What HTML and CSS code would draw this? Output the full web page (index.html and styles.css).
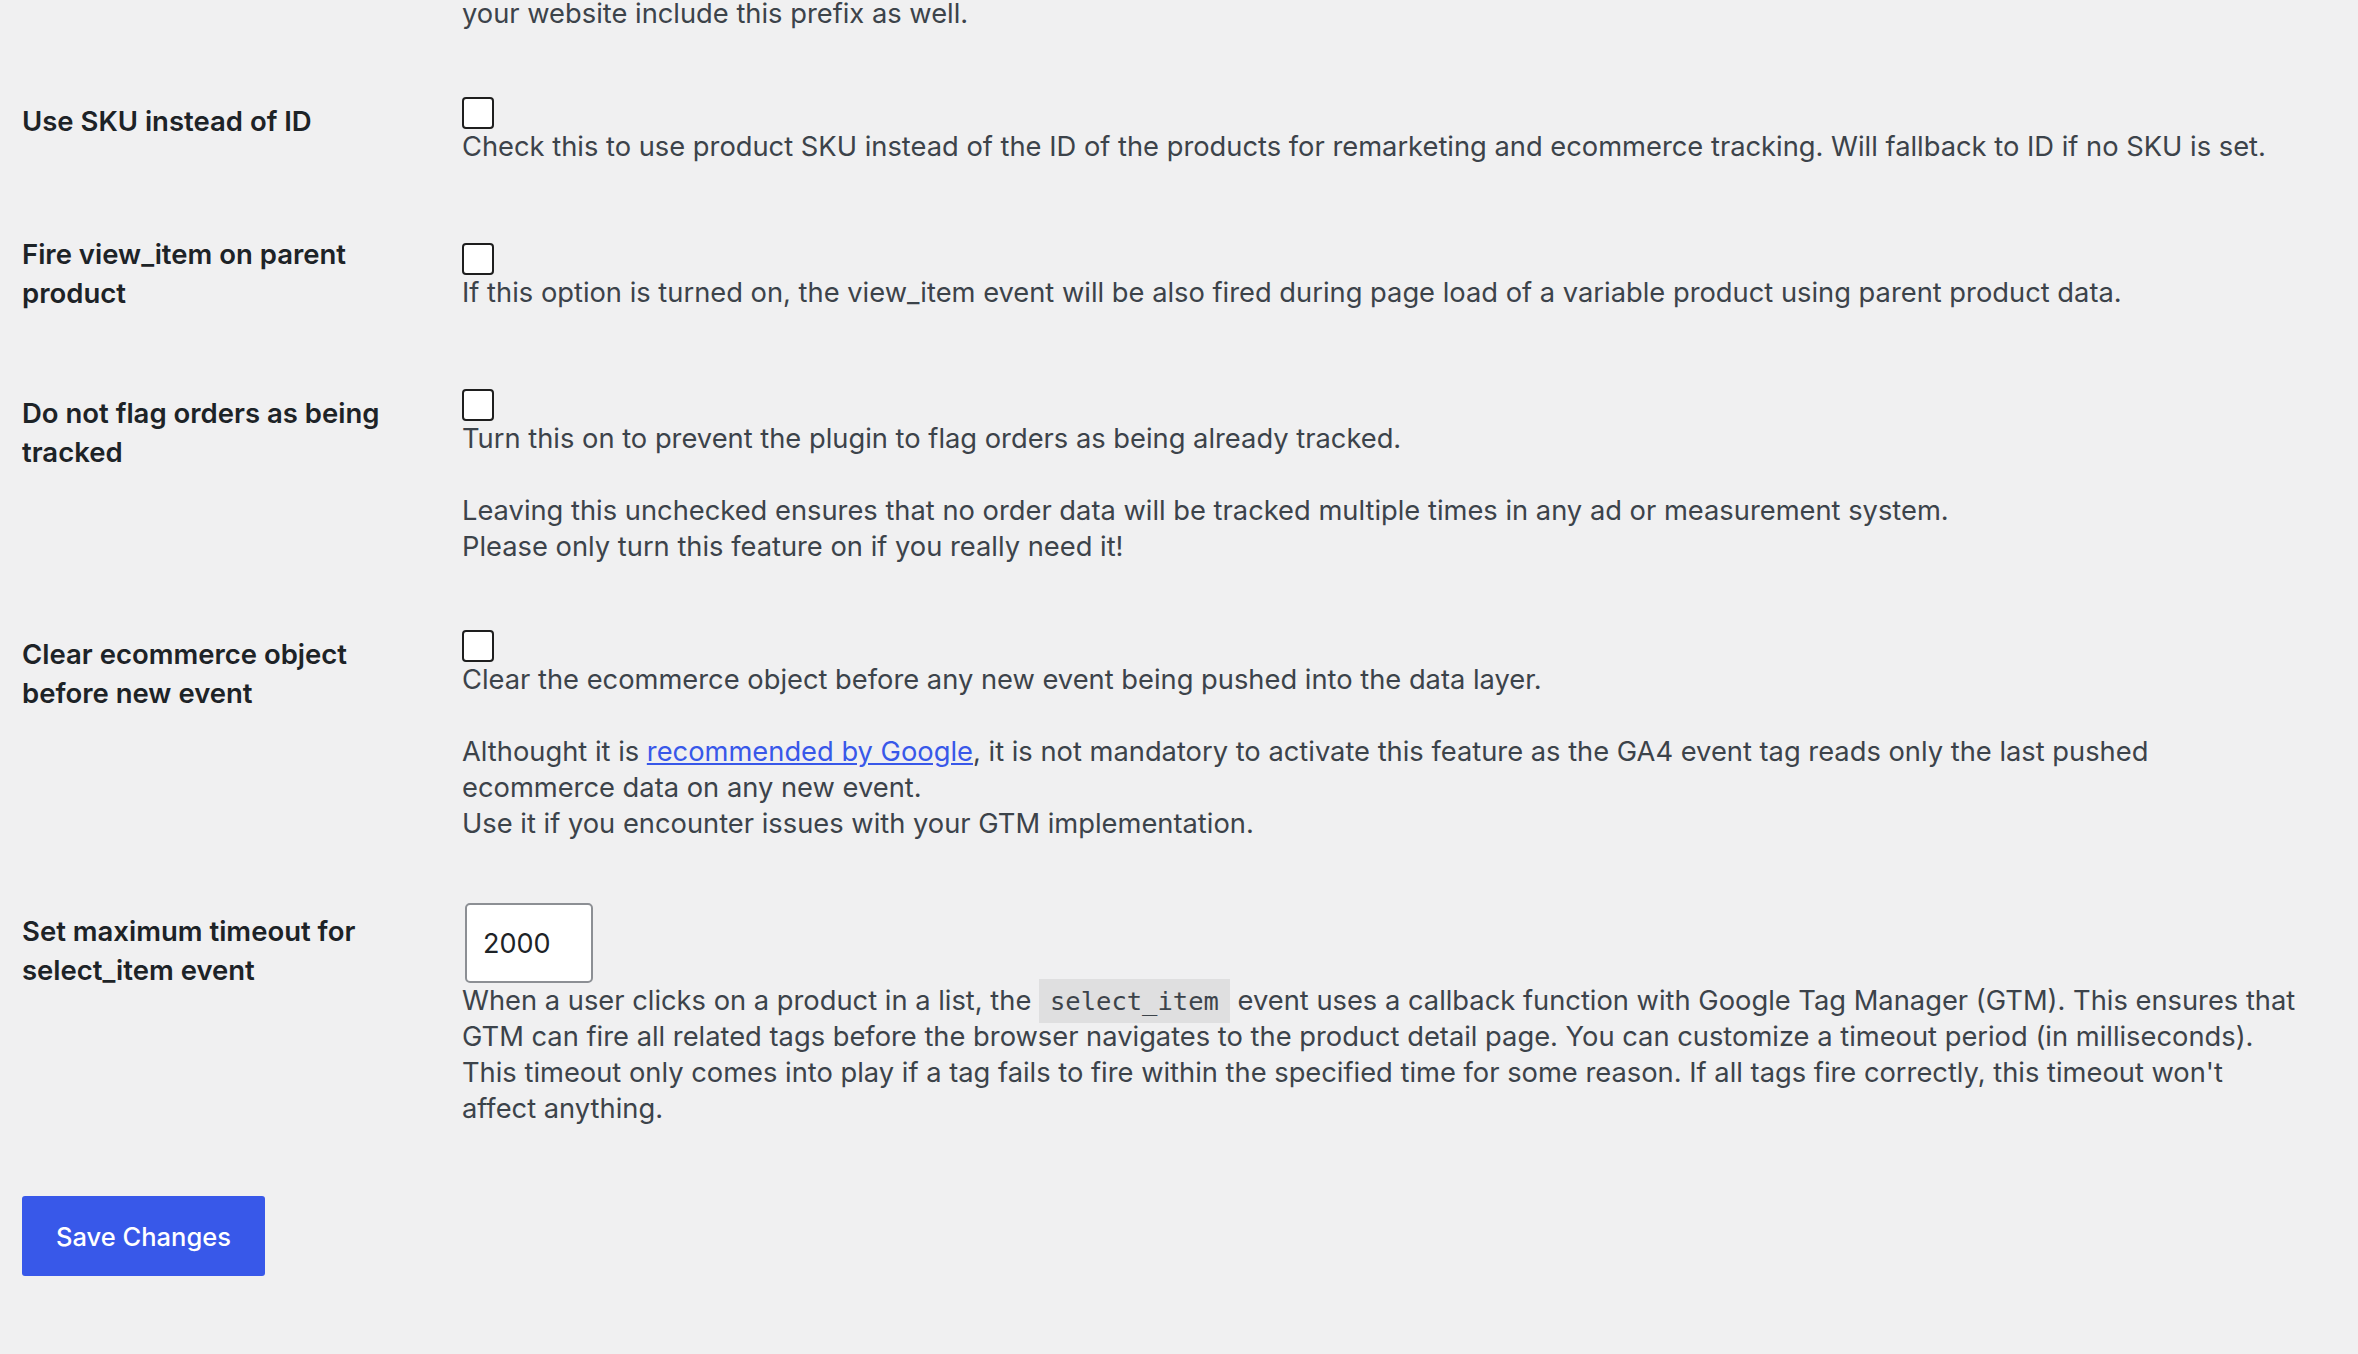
FILE: index.html
```html
<!DOCTYPE html>
<html lang="en">
<head>
	<meta charset="UTF-8">
	<title>Google Tag Manager for WordPress - Integration</title>
	<link rel="stylesheet" href="styles.css">
</head>
<body>
	<form class="settings-form" method="post" action="options.php">
		<div class="form-table">
			<div class="form-row is-multi is-cut">
				<div class="form-label"></div>
				<div class="form-field">
					<p class="description">your website include this prefix as well.</p>
				</div>
			</div>

			<div class="form-row">
				<div class="form-label"><label for="use-sku">Use SKU instead of ID</label></div>
				<div class="form-field">
					<input type="checkbox" id="use-sku" name="use-sku" class="checkbox">
					<p class="description">Check this to use product SKU instead of the ID of the products for remarketing and ecommerce tracking. Will fallback to ID if no SKU is set.</p>
				</div>
			</div>

			<div class="form-row is-raised">
				<div class="form-label"><label for="view-item-parent">Fire view_item on parent product</label></div>
				<div class="form-field">
					<input type="checkbox" id="view-item-parent" name="view-item-parent" class="checkbox">
					<p class="description">If this option is turned on, the view_item event will be also fired during page load of a variable product using parent product data.</p>
				</div>
			</div>

			<div class="form-row is-multi">
				<div class="form-label"><label for="no-order-flag">Do not flag orders as being tracked</label></div>
				<div class="form-field">
					<input type="checkbox" id="no-order-flag" name="no-order-flag" class="checkbox">
					<p class="description">Turn this on to prevent the plugin to flag orders as being already tracked.<br><br>Leaving this unchecked ensures that no order data will be tracked multiple times in any ad or measurement system.<br>Please only turn this feature on if you really need it!</p>
				</div>
			</div>

			<div class="form-row is-multi">
				<div class="form-label"><label for="clear-ecommerce">Clear ecommerce object before new event</label></div>
				<div class="form-field">
					<input type="checkbox" id="clear-ecommerce" name="clear-ecommerce" class="checkbox">
					<p class="description">Clear the ecommerce object before any new event being pushed into the data layer.<br><br>Althought it is <a href="#">recommended by Google</a>, it is not mandatory to activate this feature as the GA4 event tag reads only the last pushed ecommerce data on any new event.<br>Use it if you encounter issues with your GTM implementation.</p>
				</div>
			</div>

			<div class="form-row is-input">
				<div class="form-label"><label for="select-timeout">Set maximum timeout for select_item event</label></div>
				<div class="form-field">
					<input type="number" id="select-timeout" name="select-timeout" class="number-input" value="2000">
					<p class="description">When a user clicks on a product in a list, the <code>select_item</code> event uses a callback function with Google Tag Manager (GTM). This ensures that GTM can fire all related tags before the browser navigates to the product detail page. You can customize a timeout period (in milliseconds). This timeout only comes into play if a tag fails to fire within the specified time for some reason. If all tags fire correctly, this timeout won't affect anything.</p>
				</div>
			</div>
		</div>

		<p class="submit">
			<button type="submit" class="button-primary">Save Changes</button>
		</p>
	</form>
</body>
</html>
```

FILE: styles.css
```css
* {
	box-sizing: border-box;
}
body {
	margin: 0;
	background: #f0f0f1;
	color: #3c434a;
	font-family: Inter, "Noto Sans", sans-serif;
	font-size: 27.3px;
}

.settings-form {
	padding: 0 60px 0 22px;
}

.form-table {
	margin-top: -4px;
}
.form-row {
	display: grid;
	grid-template-columns: 440px 1fr;
}
.form-label {
	padding: 44px 40px 0 0;
	color: #1d2327;
	font-size: 27.5px;
	font-weight: 600;
	line-height: 39px;
}
.form-row.is-raised .form-label {
	padding-top: 31px;
}
.form-field {
	padding: 39px 0;
}
.form-row.is-multi .form-field {
	padding-bottom: 26px;
}
.form-row.is-input .form-field {
	padding-top: 35px;
}
.form-row.is-cut .form-field {
	padding-top: 0;
}

.description {
	margin: 0;
	line-height: 36px;
}
.description a {
	color: #3858e9;
}
.description code {
	padding: 7px 11px;
	background: rgba(0, 0, 0, 0.07);
	font-family: "DejaVu Sans Mono", monospace;
	font-size: 25.5px;
}

.checkbox {
	-webkit-appearance: none;
	appearance: none;
	display: block;
	width: 32px;
	height: 32px;
	margin: 0;
	border: 2px solid #1e1e1e;
	border-radius: 4px;
	background: #fff;
}

.number-input {
	-moz-appearance: textfield;
	display: block;
	width: 128px;
	height: 80px;
	margin: 0 0 0 3px;
	padding: 0 16px;
	border: 2px solid #8c8f94;
	border-radius: 5px;
	background: #fff;
	color: #1d2327;
	font-family: inherit;
	font-size: 27px;
}
.number-input::-webkit-inner-spin-button,
.number-input::-webkit-outer-spin-button {
	-webkit-appearance: none;
	margin: 0;
}

.submit {
	margin: 30px 0 0;
	padding: 0;
}
.button-primary {
	width: 243px;
	height: 80px;
	border: none;
	border-radius: 3px;
	background: #3858e9;
	color: #fff;
	font-family: inherit;
	font-size: 25.5px;
	font-weight: 500;
	cursor: pointer;
}
```
